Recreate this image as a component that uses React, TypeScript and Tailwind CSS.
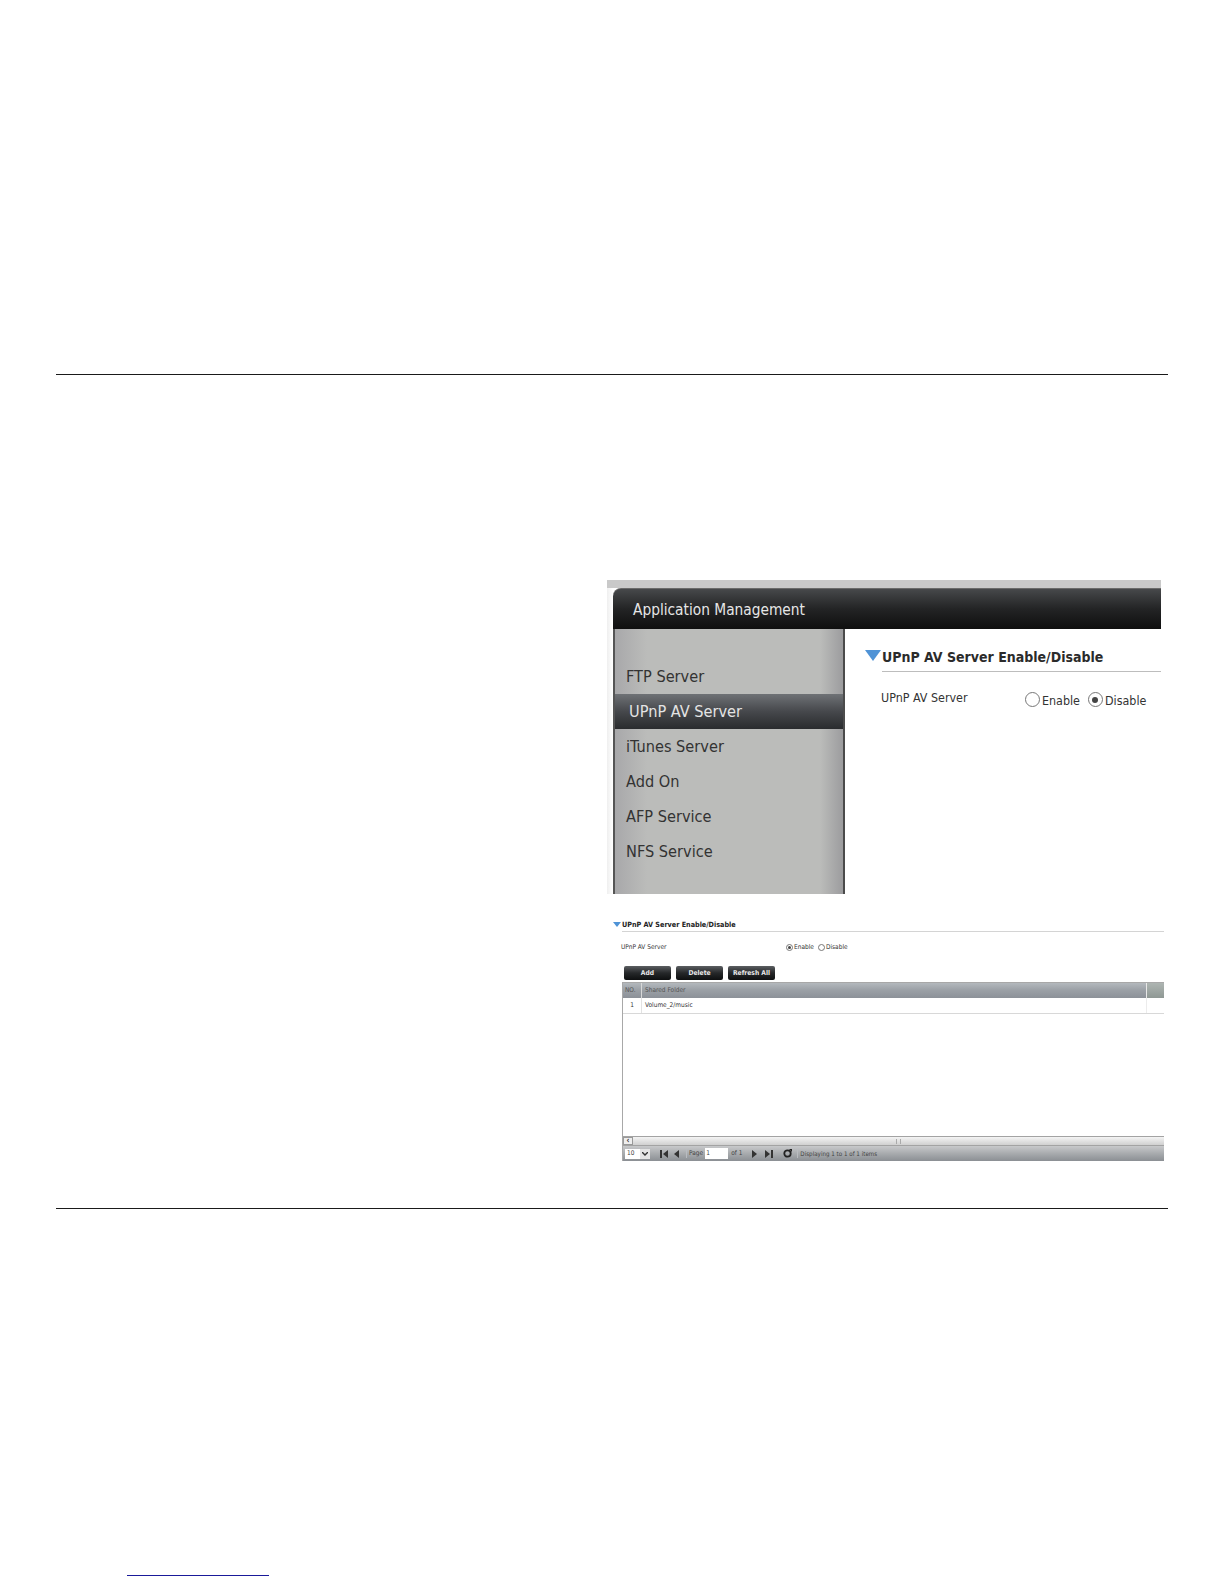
const sideItems = ["iTunes Server", "Add On", "AFP Service", "NFS Service"];

function Radio({ on, big }: { on?: boolean; big?: boolean }) {
  return (
    <span
      className={`flex shrink-0 items-center justify-center rounded-full border border-[#777] bg-white ${big ? "h-[15px] w-[15px]" : "h-[7px] w-[7px]"}`}
    >
      {on && <span className={`rounded-full bg-[#444] ${big ? "h-[6px] w-[6px]" : "h-[3px] w-[3px]"}`} />}
    </span>
  );
}

function DarkButton({ label, width }: { label: string; width: string }) {
  return (
    <div
      className={`flex h-[14px] items-center justify-center rounded-[2px] bg-gradient-to-b from-[#5c5f62] via-[#26282a] to-[#0e0f10] text-[6.7px] font-bold text-[#e8e8e8] ${width}`}
    >
      {label}
    </div>
  );
}

function FirstLast({ flip }: { flip?: boolean }) {
  return (
    <svg width="9" height="8" viewBox="0 0 9 8" className={flip ? "-scale-x-100" : ""}>
      <path d="M0 0h2v8H0zM8 0v8L3 4z" fill="#333" />
    </svg>
  );
}

function Arrow({ flip }: { flip?: boolean }) {
  return (
    <svg width="6" height="8" viewBox="0 0 6 8" className={flip ? "-scale-x-100" : ""}>
      <path d="M6 0v8L1 4z" fill="#333" />
    </svg>
  );
}

function AppManagementShot() {
  return (
    <div className="ml-[607px] mt-[205px] h-[314px] w-[554px] bg-[#c9c9c9] bg-[length:100%_8px] bg-no-repeat pt-[8px]">
      <div className="flex h-[306px] flex-col bg-gradient-to-r from-[#efefef] to-white to-[6px] pl-[6px]">
        <div className="flex h-[41px] shrink-0 items-center rounded-tl-[8px] border-t border-[#6a6a6a] bg-gradient-to-b from-[#47494b] via-[#232425] to-[#0f0f0f] pl-[20px] pt-[3px] font-['DejaVu_Sans',sans-serif] text-[15.3px] text-[#e6e6e6] [font-stretch:condensed]">
          Application Management
        </div>
        <div className="flex min-h-0 flex-1">
          <div className="w-[232px] shrink-0 border-x-2 border-l-[#555] border-r-[#4b4b4b] bg-[linear-gradient(to_right,#a8a8aa,#bbbcba_14%,#bbbcba_90%,#9c9c9e)] pt-[30px] font-['DejaVu_Sans',sans-serif] text-[16.2px] text-[#333] [font-stretch:condensed]">
            <div className="flex h-[35px] items-center pl-[11px] pt-[2px]">FTP Server</div>
            <div className="flex h-[35px] items-center bg-gradient-to-b from-[#6f7276] via-[#46484c] to-[#2a2c2e] pl-[14px] pt-[2px] text-[#e4e4e4]">
              UPnP AV Server
            </div>
            {sideItems.map((item) => (
              <div key={item} className="flex h-[35px] items-center pl-[11px] pt-[2px]">
                {item}
              </div>
            ))}
          </div>
          <div className="min-w-0 flex-1 bg-white pl-[20px] pt-[18px] font-['DejaVu_Sans',sans-serif] text-[#333] [font-stretch:condensed]">
            <div className="flex">
              <svg width="16" height="11" viewBox="0 0 16 11" className="mt-[3px] shrink-0">
                <path d="M0 0h16L8 11z" fill="#4f93d6" />
              </svg>
              <div className="ml-[1px] h-[25px] flex-1 border-b border-[#bdbdbd] text-[14px] font-bold leading-[20px] text-[#2b2b2b]">
                UPnP AV Server Enable/Disable
              </div>
            </div>
            <div className="mt-[17px] flex items-start pl-[16px] text-[12.4px]">
              <span className="w-[144px] leading-[18px]">UPnP AV Server</span>
              <span className="flex items-center">
                <Radio big />
                <span className="ml-[2px] mt-[3px] leading-[18px]">Enable</span>
              </span>
              <span className="ml-[8px] flex items-center">
                <Radio big on />
                <span className="ml-[2px] mt-[3px] leading-[18px]">Disable</span>
              </span>
            </div>
          </div>
        </div>
      </div>
    </div>
  );
}

function ServerShot() {
  return (
    <div className="ml-[613px] mt-[25px] w-[551px] font-['DejaVu_Sans',sans-serif] text-[6.5px] text-[#333] [font-stretch:condensed]">
      <div className="flex">
        <svg width="8" height="5" viewBox="0 0 8 5" className="mt-[3px] shrink-0">
          <path d="M0 0h8L4 5z" fill="#4f93d6" />
        </svg>
        <div className="ml-[1px] h-[13px] flex-1 border-b border-[#d4d4d4] text-[7.2px] font-bold leading-[12px] text-[#222]">
          UPnP AV Server Enable/Disable
        </div>
      </div>
      <div className="mt-[10px] flex items-center pl-[8px] leading-[10px]">
        <span className="w-[165px]">UPnP AV Server</span>
        <Radio on />
        <span className="ml-[1px]">Enable</span>
        <span className="ml-[4px]">
          <Radio />
        </span>
        <span className="ml-[1px]">Disable</span>
      </div>
      <div className="mt-[14px] flex gap-[5px] pl-[11px]">
        <DarkButton label="Add" width="w-[47px]" />
        <DarkButton label="Delete" width="w-[47px]" />
        <DarkButton label="Refresh All" width="w-[47px]" />
      </div>
      <div className="ml-[9px] mt-[2px] border-l border-t border-[#a8a8a8]">
        <div className="flex h-[15px] items-center bg-gradient-to-b from-[#b4b9bd] via-[#9a9fa5] to-[#8c9198] text-[#555]">
          <div className="w-[19px] border-r border-[#d8d8d8] pl-[2px] leading-[15px]">NO.</div>
          <div className="flex-1 pl-[3px]">Shared Folder</div>
          <div className="h-full w-[18px] border-l border-[#e8e8e8] bg-gradient-to-b from-[#aeb5b2] to-[#8f9894]" />
        </div>
        <div className="flex h-[16px] items-center border-b border-[#d8d8d8] bg-white">
          <div className="h-full w-[19px] border-r border-[#e2e2e2] text-center leading-[15px]">1</div>
          <div className="flex-1 pl-[3px]">Volume_2/music</div>
          <div className="h-full w-[18px] border-l border-[#ececec]" />
        </div>
        <div className="h-[122px] bg-white" />
        <div className="flex h-[10px] border-y border-[#a3a3a3] bg-gradient-to-b from-[#f4f4f4] to-[#d0d0d0]">
          <div className="flex w-[10px] items-center justify-center border border-[#999] bg-[#eee] text-[8px] font-bold leading-none">‹</div>
          <div className="flex flex-1 items-center justify-center">
            <div className="h-[5px] w-[5px] border-x border-[#aaa]" />
          </div>
        </div>
        <div className="flex h-[15px] items-center bg-gradient-to-b from-[#c8c9cb] via-[#a8abae] to-[#8b8f94] pl-[2px] text-[#444]">
          <div className="flex h-[10px] w-[25px] items-center justify-between bg-white pl-[2px]">
            <span>10</span>
            <span className="flex h-full w-[10px] items-center justify-center bg-[#e4e4e4]">
              <svg width="6" height="4" viewBox="0 0 6 4">
                <path d="M0 0l3 3 3-3" fill="none" stroke="#333" strokeWidth="1.4" />
              </svg>
            </span>
          </div>
          <span className="ml-[10px]"><FirstLast /></span>
          <span className="ml-[4px]"><Arrow /></span>
          <span className="ml-[7px] border-l border-[#b9bcc0] pl-[2px]">Page</span>
          <div className="ml-[2px] h-[11px] w-[23px] bg-white pl-[1px] leading-[11px]">1</div>
          <span className="ml-[3px]">of 1</span>
          <span className="ml-[10px]"><Arrow flip /></span>
          <span className="ml-[6px]"><FirstLast flip /></span>
          <svg width="9" height="9" viewBox="0 0 9 9" className="ml-[10px]">
            <circle cx="4.5" cy="4.5" r="3.2" fill="none" stroke="#222" strokeWidth="1.8" />
            <path d="M6 0h3v3z" fill="#222" />
          </svg>
          <span className="ml-[5px] border-l border-[#b9bcc0] pl-[2px] text-[6.2px]">Displaying 1 to 1 of 1 items</span>
        </div>
      </div>
    </div>
  );
}

export default function App() {
  return (
    <div className="h-[1584px] w-[1224px] overflow-hidden bg-white pt-[374px]">
      <div className="ml-[56px] h-px w-[1112px] bg-[#1a1a1a]" />
      <AppManagementShot />
      <ServerShot />
      <div className="ml-[56px] mt-[47px] h-px w-[1112px] bg-[#1a1a1a]" />
      <div className="ml-[127px] mt-[366px] h-px w-[142px] bg-[#1a1a9a]" />
    </div>
  );
}
